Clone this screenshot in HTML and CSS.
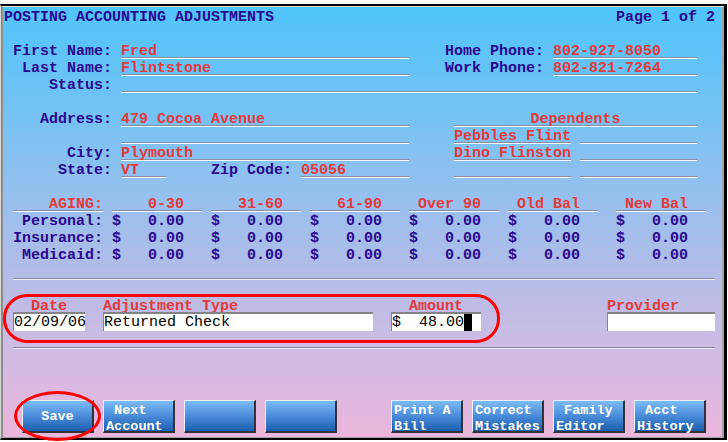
FILE: index.html
```html
<!DOCTYPE html>
<html lang="en">
<head>
    <meta charset="UTF-8">
    <title>Posting Accounting Adjustments</title>
    <link rel="stylesheet" href="styles.css">
</head>
<body>
    <div class="frame">
        <div class="screen">
            <!-- Header -->
            <div class="row">
                <span class="title">POSTING ACCOUNTING ADJUSTMENTS</span>
                <span>Page 1 of 2</span>
            </div>
            <div class="row"></div>

            <!-- Patient info -->
            <div class="row">
                <span class="lbl">First Name:</span>
                <span class="fld name">Fred</span>
                <span class="lbl phone-lbl">Home Phone:</span>
                <span class="fld phone">802-927-8050</span>
            </div>
            <div class="row">
                <span class="lbl">Last Name:</span>
                <span class="fld name">Flintstone</span>
                <span class="lbl phone-lbl">Work Phone:</span>
                <span class="fld phone">802-821-7264</span>
            </div>
            <div class="row">
                <span class="lbl">Status:</span>
                <span class="fld status"></span>
            </div>
            <div class="row"></div>
            <div class="row">
                <span class="lbl">Address:</span>
                <span class="fld name">479 Cocoa Avenue</span>
                <span class="fld deps-head">Dependents</span>
            </div>
            <div class="row">
                <span class="lbl"></span>
                <span class="fld name"></span>
                <span class="fld dep first">Pebbles Flint</span>
                <span class="fld dep"></span>
            </div>
            <div class="row">
                <span class="lbl">City:</span>
                <span class="fld name">Plymouth</span>
                <span class="fld dep first">Dino Flinston</span>
                <span class="fld dep"></span>
            </div>
            <div class="row">
                <span class="lbl">State:</span>
                <span class="fld state">VT</span>
                <span class="lbl zip-lbl">Zip Code:</span>
                <span class="fld zip">05056</span>
                <span class="fld dep first"></span>
                <span class="fld dep"></span>
            </div>
            <div class="row"></div>

            <!-- Aging table -->
            <div class="row">
                <span class="age-lbl fld red-hd">AGING:</span>
                <span class="age-col fld red-hd">0-30</span>
                <span class="age-col fld red-hd">31-60</span>
                <span class="age-col fld red-hd">61-90</span>
                <span class="age-col fld red-hd">Over 90</span>
                <span class="age-col fld red-hd">Old Bal</span>
                <span class="age-col fld red-hd last">New Bal</span>
            </div>
            <div class="row">
                <span class="age-lbl">Personal:</span>
                <span class="age-col amt"><span>$</span><span>0.00</span></span>
                <span class="age-col amt"><span>$</span><span>0.00</span></span>
                <span class="age-col amt"><span>$</span><span>0.00</span></span>
                <span class="age-col amt"><span>$</span><span>0.00</span></span>
                <span class="age-col amt"><span>$</span><span>0.00</span></span>
                <span class="age-col amt last"><span>$</span><span>0.00</span></span>
            </div>
            <div class="row">
                <span class="age-lbl">Insurance:</span>
                <span class="age-col amt"><span>$</span><span>0.00</span></span>
                <span class="age-col amt"><span>$</span><span>0.00</span></span>
                <span class="age-col amt"><span>$</span><span>0.00</span></span>
                <span class="age-col amt"><span>$</span><span>0.00</span></span>
                <span class="age-col amt"><span>$</span><span>0.00</span></span>
                <span class="age-col amt last"><span>$</span><span>0.00</span></span>
            </div>
            <div class="row">
                <span class="age-lbl">Medicaid:</span>
                <span class="age-col amt"><span>$</span><span>0.00</span></span>
                <span class="age-col amt"><span>$</span><span>0.00</span></span>
                <span class="age-col amt"><span>$</span><span>0.00</span></span>
                <span class="age-col amt"><span>$</span><span>0.00</span></span>
                <span class="age-col amt"><span>$</span><span>0.00</span></span>
                <span class="age-col amt last"><span>$</span><span>0.00</span></span>
            </div>

            <div class="sep first"></div>

            <!-- Adjustment entry -->
            <div class="adj-labels">
                <span class="date-lbl">Date</span>
                <span class="type-lbl">Adjustment Type</span>
                <span class="amount-lbl">Amount</span>
                <span class="provider-lbl">Provider</span>
            </div>
            <div class="adj-inputs">
                <div class="box date">02/09/06</div>
                <div class="box type">Returned Check</div>
                <div class="box amount">$  48.00<span class="cursor"></span></div>
                <div class="box provider"></div>
            </div>

            <div class="sep second"></div>

            <!-- Bottom buttons -->
            <div class="btns">
                <button class="btn single">Save</button>
                <button class="btn"> Next
Account</button>
                <button class="btn"></button>
                <button class="btn"></button>
                <button class="btn apart">Print A
Bill</button>
                <button class="btn">Correct
Mistakes</button>
                <button class="btn"> Family
Editor</button>
                <button class="btn"> Acct
History</button>
            </div>

            <!-- Red marker circles -->
            <div class="mark adj-mark"></div>
            <div class="mark save-mark"></div>
        </div>
    </div>
</body>
</html>
```

FILE: styles.css
```css
* {
    margin: 0;
    padding: 0;
    box-sizing: border-box;
}

html, body {
    width: 728px;
    height: 442px;
    overflow: hidden;
    background: #fff;
    font-family: 'Liberation Mono', 'DejaVu Sans Mono', monospace;
}

/* Window frame */
.frame {
    margin-top: 4px;
    width: 727px;
    height: 436px;
    border-top: 2px solid #000;
    border-right: 3px solid #000;
    border-bottom: 2px solid #000;
    border-left: 1px solid #d8d8d8;
}

.screen {
    position: relative;
    height: 100%;
    padding: 1px 0 0 1px;
    border-top: 1px solid #e4e4e4;
    border-left: 2px solid #8c8c8c;
    border-right: 2px solid #a4a4a4;
    border-bottom: 1px solid #a0a0a0;
    background: linear-gradient(#50c4fa 0%, #70c2f4 22%, #98c0ee 45%, #b0bce8 60%, #ccbce4 78%, #ecb6dc 100%);
    color: #2a0890;
    font-size: 15px;
    font-weight: bold;
    line-height: 19px;
}

.row {
    display: flex;
    height: 17px;
    white-space: pre;
}

.title {
    width: 68ch;
}

/* Labels and underlined fields */
.lbl {
    width: 13ch;
    padding-right: 1ch;
    text-align: right;
}

.phone-lbl {
    width: 16ch;
}

.zip-lbl {
    width: 15ch;
}

.fld {
    height: 17px;
    color: #e33b3b;
    border-bottom: 1px solid #fff;
    box-shadow: inset 0 -1px 0 #8c8ca4;
}

.fld.name { width: 32ch; }
.fld.phone { width: 16ch; }
.fld.status { width: 64ch; }
.fld.state { width: 5ch; }
.fld.zip { width: 12ch; }

.fld.deps-head {
    width: 27ch;
    margin-left: 5ch;
    text-align: center;
}

.fld.dep {
    width: 13ch;
    margin-left: 1ch;
}

.fld.dep.first {
    margin-left: 5ch;
}

/* Aging table */
.age-lbl {
    width: 10ch;
    margin-left: 1ch;
    text-align: right;
}

.age-col {
    width: 10ch;
    margin-left: 1ch;
    padding-right: 2ch;
    text-align: right;
}

.age-col.last {
    margin-left: 2ch;
}

.amt {
    display: flex;
    justify-content: space-between;
}

/* Separators */
.sep {
    width: 702px;
    height: 2px;
    margin-left: 9px;
    border-top: 1px solid #8a8aa2;
    border-bottom: 1px solid #eeeefa;
}

.sep.first {
    margin-top: 15px;
}

.sep.second {
    margin-top: 16px;
}

/* Adjustment entry */
.adj-labels {
    display: flex;
    height: 15px;
    margin-top: 17px;
    line-height: 19px;
    color: #e33b3b;
    white-space: pre;
}

.date-lbl { margin-left: 3ch; }
.type-lbl { margin-left: 4ch; }
.amount-lbl { margin-left: 19ch; }
.provider-lbl { margin-left: 16ch; }

.adj-inputs {
    display: flex;
    height: 19px;
}

.box {
    height: 19px;
    background: #fff;
    border-top: 2px solid #848484;
    border-left: 1px solid #848484;
    color: #000;
    font-weight: normal;
    line-height: 18px;
    white-space: pre;
}

.box.date { width: 8ch; margin-left: 1ch; }
.box.type { width: 30ch; margin-left: 2ch; }
.box.amount { width: 10ch; margin-left: 2ch; }
.box.provider { width: 12ch; margin-left: 14ch; }

.cursor {
    display: inline-block;
    width: 8px;
    height: 17px;
    vertical-align: top;
    background: #000;
}

/* Buttons */
.btns {
    display: flex;
    gap: 9px;
    margin-top: 51px;
    padding-left: 18px;
}

.btn {
    width: 72px;
    height: 33px;
    padding: 2px 0 0 2px;
    background: linear-gradient(#7cbcf4, #4a8cda 50%, #1c5eae);
    border-top: 1px solid #e8f0fa;
    border-left: 1px solid #e8f0fa;
    border-right: 2px solid #303438;
    border-bottom: 2px solid #303438;
    color: #fff;
    font-family: 'Liberation Mono', 'DejaVu Sans Mono', monospace;
    font-size: 13.5px;
    font-weight: bold;
    line-height: 15.5px;
    text-align: left;
    white-space: pre;
    cursor: pointer;
}

.btn.single {
    padding: 1px 0 0;
    text-align: center;
}

.btn.apart {
    margin-left: 45px;
}

/* Red hand-drawn markers */
.mark {
    position: absolute;
    border: 3px solid #f00;
    pointer-events: none;
}

.adj-mark {
    left: 0;
    top: 287px;
    width: 497px;
    height: 49px;
    border-radius: 24px;
}

.save-mark {
    left: 11px;
    top: 384px;
    width: 87px;
    height: 50px;
    border-radius: 50%;
}
```
